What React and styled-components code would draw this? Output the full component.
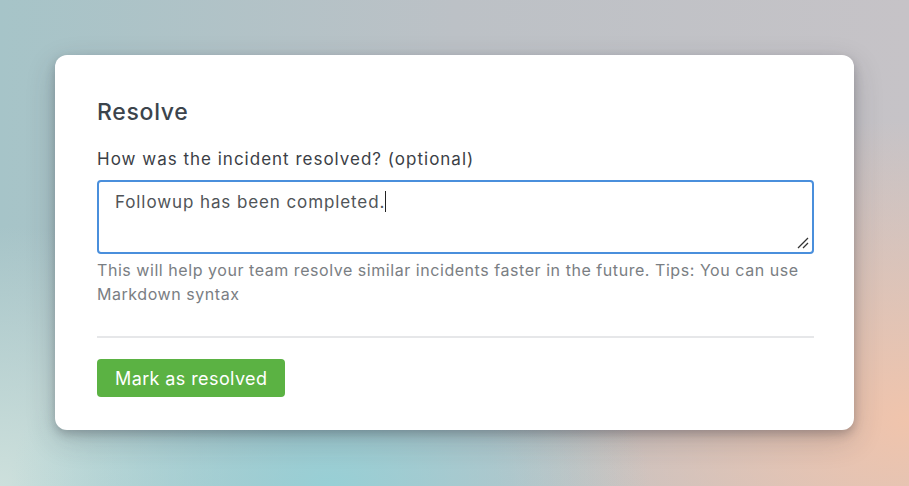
import React from 'react'
import styled, { createGlobalStyle } from 'styled-components';

const GlobalStyle = createGlobalStyle`
  html, body {
    margin: 0;
    padding: 0;
  }
  body {
    font-family: Inter, "Liberation Sans", sans-serif;
    -webkit-font-smoothing: antialiased;
  }
`;

const Backdrop = styled.div`
  width: 909px;
  height: 486px;
  box-sizing: border-box;
  padding: 55px 55px 0 55px;
  overflow: hidden;
  background:
    radial-gradient(ellipse 320px 200px at 330px 486px, rgba(150, 208, 214, 0.95), rgba(150, 208, 214, 0) 100%),
    radial-gradient(ellipse 420px 300px at 909px 420px, rgba(240, 196, 172, 1), rgba(240, 196, 172, 0) 100%),
    radial-gradient(ellipse 300px 260px at 0px 486px, rgba(205, 224, 220, 1), rgba(205, 224, 220, 0) 100%),
    linear-gradient(90deg, #a6c4c8 0%, #bcc1c6 50%, #c6c3c7 100%);
`;

const Card = styled.div`
  width: 799px;
  height: 375px;
  box-sizing: border-box;
  padding: 41px 40px 0 42px;
  background: #ffffff;
  border-radius: 12px;
  box-shadow: 0 4px 10px rgba(40, 40, 50, 0.25), 0 10px 30px rgba(40, 40, 50, 0.2);
`;

const Title = styled.h2`
  margin: 0 0 20px 0;
  font-size: 23px;
  line-height: 32px;
  font-weight: 500;
  letter-spacing: 0.7px;
  color: #3c444c;
`;

const Label = styled.label`
  display: block;
  margin-bottom: 10px;
  font-size: 17px;
  line-height: 22px;
  letter-spacing: 1px;
  color: #3b4046;
`;

const TextArea = styled.div`
  position: relative;
  height: 74px;
  box-sizing: border-box;
  border: 2px solid #4a8fdc;
  border-radius: 4px;
  padding: 7px 16px;
  font-size: 17px;
  line-height: 26px;
  letter-spacing: 0.9px;
  color: #505458;
`;

const Caret = styled.span`
  display: inline-block;
  width: 1px;
  height: 21px;
  vertical-align: -4px;
  background: #222;
`;

const Grip = styled.svg`
  position: absolute;
  right: 3px;
  bottom: 3px;
`;

const Help = styled.p`
  margin: 4px 0 0 0;
  font-size: 16px;
  line-height: 24px;
  letter-spacing: 0.55px;
  color: #7a7e83;
`;

const Divider = styled.hr`
  margin: 30px 0 21px 0;
  border: 0;
  border-top: 2px solid #e6e7e9;
`;

const Button = styled.button`
  height: 38px;
  padding: 0 18px;
  border: 0;
  border-radius: 4px;
  background: #5bb243;
  color: #ffffff;
  font-family: inherit;
  font-size: 18px;
  letter-spacing: 0.4px;
  cursor: pointer;
`;

const App = () => (
  <Backdrop>
    <GlobalStyle />
    <Card>
      <Title>Resolve</Title>
      <Label>How was the incident resolved? (optional)</Label>
      <TextArea>
        Followup has been completed.<Caret />
        <Grip width="14" height="14" viewBox="0 0 14 14">
          <path d="M13 3 L3 13 M13 8 L8 13" stroke="#333" strokeWidth="1.3" fill="none" />
        </Grip>
      </TextArea>
      <Help>
        This will help your team resolve similar incidents faster in the future. Tips: You can use Markdown syntax
      </Help>
      <Divider />
      <Button>Mark as resolved</Button>
    </Card>
  </Backdrop>
)

export default App
